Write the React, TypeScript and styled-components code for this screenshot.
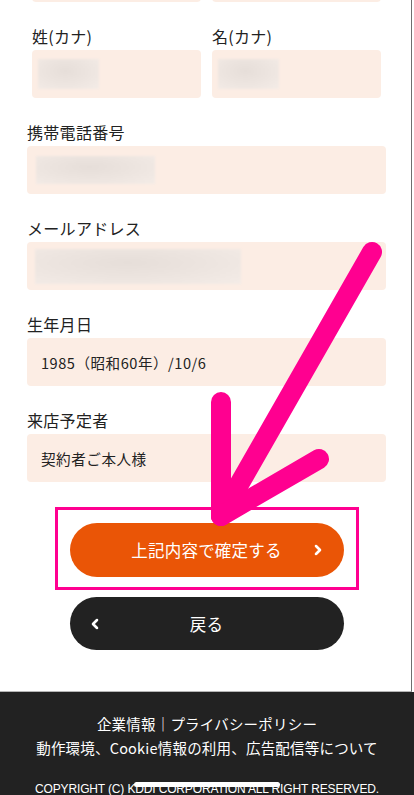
import * as React from "react";
import styled, { createGlobalStyle } from "styled-components";

const GlobalStyle = createGlobalStyle`
  html, body {
    margin: 0;
    padding: 0;
    background: #fff;
    overflow: hidden;
  }
  body {
    font-family: "Noto Sans CJK JP", "Noto Sans", sans-serif;
    color: #222;
  }
`;

type Field = {
  label: string;
  value?: string;
  blur?: { w: number; h: number; left: number };
};

const kanaRow: Field[] = [
  { label: "姓(カナ)", blur: { w: 61, h: 30, left: 6 } },
  { label: "名(カナ)", blur: { w: 61, h: 30, left: 6 } },
];

const fields: Field[] = [
  { label: "携帯電話番号", blur: { w: 119, h: 28, left: 9 } },
  { label: "メールアドレス", blur: { w: 206, h: 35, left: 8 } },
  { label: "生年月日", value: "1985（昭和60年）/10/6" },
  { label: "来店予定者", value: "契約者ご本人様" },
];

const Chevron = ({ dir }: { dir: "left" | "right" }) => (
  <svg width="8" height="11" viewBox="0 0 8 11">
    <polyline
      points={dir === "right" ? "2,1.5 6,5.5 2,9.5" : "6,1.5 2,5.5 6,9.5"}
      fill="none"
      stroke="#fff"
      strokeWidth="2.6"
      strokeLinecap="round"
      strokeLinejoin="round"
    />
  </svg>
);

const FieldBlock = ({ field }: { field: Field }) => (
  <FieldWrap>
    <Label>{field.label}</Label>
    <InputBox $pad={field.blur ? field.blur.left : 14}>
      {field.blur ? (
        <Blur style={{ width: field.blur.w, height: field.blur.h }} />
      ) : (
        <Value>{field.value}</Value>
      )}
    </InputBox>
  </FieldWrap>
);

export default function App() {
  return (
    <React.Fragment>
      <GlobalStyle />
      <Page>
        <Panel>
          <Form>
            {/* name fields, scrolled mostly out of view */}
            <Pair>
              <InputBox $pad={6} />
              <InputBox $pad={6} />
            </Pair>
            <Pair>
              {kanaRow.map((f) => (
                <FieldBlock key={f.label} field={f} />
              ))}
            </Pair>
            {fields.map((f) => (
              <FieldBlock key={f.label} field={f} />
            ))}
          </Form>
          <Actions>
            <Highlight>
              <Button $kind="primary">
                <span>上記内容で確定する</span>
                <Icon $side="right">
                  <Chevron dir="right" />
                </Icon>
              </Button>
            </Highlight>
            <Button $kind="back">
              <Icon $side="left">
                <Chevron dir="left" />
              </Icon>
              <span>戻る</span>
            </Button>
          </Actions>
        </Panel>
        <Footer>
          <FooterLine>企業情報｜プライバシーポリシー</FooterLine>
          <FooterLine>動作環境、Cookie情報の利用、広告配信等について</FooterLine>
          <Copyright>COPYRIGHT (C) KDDI CORPORATION ALL RIGHT RESERVED.</Copyright>
        </Footer>
        <ArrowMark width="414" height="795" viewBox="0 0 414 795">
          <g
            fill="none"
            stroke="#ff0090"
            strokeWidth="20"
            strokeLinecap="round"
            strokeLinejoin="round"
          >
            <line x1="372" y1="252" x2="221" y2="516" />
            <line x1="221" y1="402" x2="221" y2="516" />
            <line x1="319" y1="459" x2="221" y2="516" />
          </g>
        </ArrowMark>
        <HomeBar />
      </Page>
    </React.Fragment>
  );
}

const Page = styled.div`
  position: relative;
  width: 414px;
  height: 795px;
  overflow: hidden;
`;

const Panel = styled.div`
  width: 412px;
  border-right: 1px solid #6f6f6f;
  border-bottom: 1px solid #b5b5b5;
  box-sizing: border-box;
  padding: 0 25px 41px 27px;
  background: #fff;
`;

const Form = styled.div`
  margin-top: -46px;
  display: flex;
  flex-direction: column;
  gap: 24px;
`;

const Pair = styled.div`
  display: grid;
  grid-template-columns: 1fr 1fr;
  column-gap: 11px;
  padding: 0 5px;
`;

const FieldWrap = styled.div`
  display: flex;
  flex-direction: column;
`;

const Label = styled.div`
  height: 24px;
  line-height: 21px;
  font-size: 16px;
  letter-spacing: 0.3px;
  color: #222;
`;

const InputBox = styled.div<{ $pad: number }>`
  height: 48px;
  background: #fcede4;
  border-radius: 4px;
  display: flex;
  align-items: center;
  padding-left: ${(p) => p.$pad}px;
`;

const Blur = styled.div`
  background: radial-gradient(
    ellipse at 45% 40%,
    #e6ded9 0%,
    #ece4df 45%,
    #f4ece7 100%
  );
  filter: blur(1.2px);
`;

const Value = styled.span`
  font-size: 14.6px;
  letter-spacing: 0.5px;
  color: #222;
`;

const Actions = styled.div`
  display: flex;
  flex-direction: column;
  align-items: center;
  margin-top: 25px;
`;

const Highlight = styled.div`
  border: 3px solid #ff0090;
  padding: 13px 12px 10px;
`;

const Button = styled.div<{ $kind: "primary" | "back" }>`
  position: relative;
  width: 274px;
  height: ${(p) => (p.$kind === "primary" ? 54 : 53)}px;
  margin-top: ${(p) => (p.$kind === "primary" ? 0 : 7)}px;
  border-radius: 27px;
  background: ${(p) => (p.$kind === "primary" ? "#ea5506" : "#222")};
  color: #fff;
  display: flex;
  align-items: center;
  justify-content: center;
  font-size: 16.5px;
  letter-spacing: 0.2px;
  box-sizing: border-box;
`;

const Icon = styled.span<{ $side: "left" | "right" }>`
  position: absolute;
  top: 50%;
  ${(p) => (p.$side === "right" ? "right: 22px;" : "left: 21px;")}
  transform: translateY(-50%);
  display: flex;
`;

const Footer = styled.footer`
  background: #222;
  color: #fff;
  text-align: center;
  padding-top: 20px;
  height: 120px;
`;

const FooterLine = styled.div`
  font-size: 14.5px;
  line-height: 24px;
  letter-spacing: 0.2px;
`;

const Copyright = styled.div`
  margin-top: 22px;
  font-family: "Liberation Sans", Arial, sans-serif;
  font-size: 12px;
  line-height: 14px;
  letter-spacing: -0.15px;
`;

const ArrowMark = styled.svg`
  position: absolute;
  top: 0;
  left: 0;
  pointer-events: none;
`;

const HomeBar = styled.div`
  position: absolute;
  left: 134px;
  bottom: 8px;
  width: 146px;
  height: 5px;
  border-radius: 3px;
  background: #fff;
`;
